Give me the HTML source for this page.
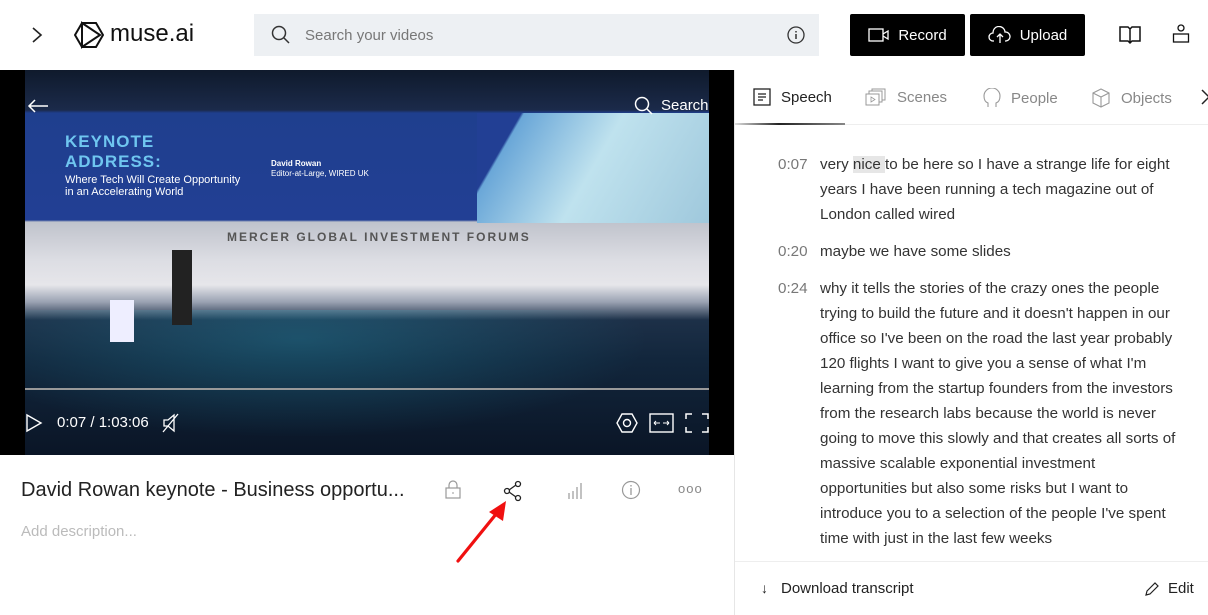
<!DOCTYPE html>
<html><head><meta charset="utf-8"><style>
*{box-sizing:border-box;margin:0;padding:0}
body{width:1208px;height:615px;overflow:hidden;background:#fff;font-family:"Liberation Sans",Arial,sans-serif;position:relative;color:#222}
.abs{position:absolute}
svg{display:block}
.btn{position:absolute;top:14px;height:42px;background:#000;color:#fff;font-size:15px;display:flex;align-items:center;justify-content:center;gap:8px;border-radius:2px}
.tab{position:absolute;top:88px;font-size:15px;color:#888;display:flex;align-items:center;gap:10px}
.row{position:absolute;left:778px;font-size:15.2px;line-height:25px;color:#333}
.row .t{position:absolute;left:0;color:#777;width:32px}
.row .x{position:absolute;left:42px;width:362px}
</style></head><body>
<!-- header -->
<svg class="abs" style="left:30px;top:26px" width="14" height="18"><path d="M3 2l8 7-8 7" fill="none" stroke="#222" stroke-width="1.6"/></svg>
<svg class="abs" style="left:74px;top:21px" width="30" height="28" viewBox="0 0 30 28"><path d="M8 2h14l7 12-7 12H8L1 14z" fill="none" stroke="#111" stroke-width="2"/><path d="M8 2l18 12L8 26z" fill="none" stroke="#111" stroke-width="2"/></svg>
<div class="abs" style="left:110px;top:20px;font-size:24px;color:#111">muse.ai</div>
<div class="abs" style="left:254px;top:14px;width:565px;height:42px;background:#edf0f3"></div>
<svg class="abs" style="left:271px;top:25px" width="20" height="20"><circle cx="8" cy="8" r="6.5" fill="none" stroke="#333" stroke-width="1.5"/><path d="M13 13l5 5" stroke="#333" stroke-width="1.5"/></svg>
<div class="abs" style="left:305px;top:27px;font-size:15px;color:#777">Search your videos</div>
<svg class="abs" style="left:787px;top:26px" width="18" height="18"><circle cx="9" cy="9" r="8" fill="none" stroke="#333" stroke-width="1.3"/><path d="M9 8v5M9 5v1.5" stroke="#333" stroke-width="1.5"/></svg>
<div class="btn" style="left:850px;width:115px"><svg width="22" height="16"><rect x="1" y="2" width="14" height="12" fill="none" stroke="#fff" stroke-width="1.3"/><path d="M15 7l5-3v8l-5-3" fill="none" stroke="#fff" stroke-width="1.3"/></svg>Record</div>
<div class="btn" style="left:970px;width:115px"><svg width="24" height="18"><path d="M6 15H5a4 4 0 0 1 0-8 6 6 0 0 1 12-1 4.5 4.5 0 0 1 1 9h-1" fill="none" stroke="#fff" stroke-width="1.3"/><path d="M12 17V8M9 11l3-3 3 3" fill="none" stroke="#fff" stroke-width="1.3"/></svg>Upload</div>
<svg class="abs" style="left:1119px;top:25px" width="22" height="20"><path d="M1 2h8l2 2 2-2h8v14h-8l-2 2-2-2H1zM11 4v13" fill="none" stroke="#111" stroke-width="1.5"/></svg>
<svg class="abs" style="left:1172px;top:24px" width="18" height="20"><circle cx="9" cy="4" r="3" fill="none" stroke="#111" stroke-width="1.3"/><rect x="1.5" y="10" width="15" height="8" fill="none" stroke="#111" stroke-width="1.3"/></svg>

<!-- video -->
<div class="abs" style="left:0;top:70px;width:735px;height:385px;background:#000;overflow:hidden">
 <div class="abs" style="left:25px;top:0;width:684px;height:385px;background:linear-gradient(#0f1a2c 0,#1b2a4a 40px,#1f3f8e 43px,#223f94 150px,#c0c3cc 152px,#dcdde3 190px,#e6e6ea 215px,#9aa2b2 232px,#1d3048 250px,#12263c 290px,#0a1526 385px)"></div>
 <div class="abs" style="left:477px;top:43px;width:232px;height:110px;background:linear-gradient(120deg,#223f94 0,#223f94 15%,#6aa7d8 16%,#bfe2ee 50%,#9fc8dc 100%)"></div>
 <div class="abs" style="left:25px;top:240px;width:684px;height:145px;background:radial-gradient(ellipse at 40% 20%,rgba(40,170,200,.3),transparent 60%)"></div>
 <div class="abs" style="left:65px;top:62px;color:#6fc6f0;font-size:17px;font-weight:bold;letter-spacing:1px;line-height:20px">KEYNOTE<br>ADDRESS:</div>
 <div class="abs" style="left:65px;top:104px;color:#fff;font-size:11px;line-height:12px">Where Tech Will Create Opportunity<br>in an Accelerating World</div>
 <div class="abs" style="left:271px;top:89px;color:#fff;font-size:8px;line-height:10px"><b>David Rowan</b><br>Editor-at-Large, WIRED UK</div>
 <div class="abs" style="left:227px;top:160px;color:#555;font-size:12px;letter-spacing:2px;font-weight:bold">MERCER GLOBAL INVESTMENT FORUMS</div>
 <div class="abs" style="left:172px;top:180px;width:20px;height:75px;background:#222"></div>
 <div class="abs" style="left:110px;top:230px;width:24px;height:42px;background:#eef"></div>
 <div class="abs" style="left:25px;top:318px;width:684px;height:2px;background:#999"></div>
 <svg class="abs" style="left:27px;top:29px" width="22" height="14"><path d="M21 7H2M8 1L2 7l6 6" fill="none" stroke="#fff" stroke-width="1.5"/></svg>
 <svg class="abs" style="left:634px;top:26px" width="20" height="20"><circle cx="8" cy="8" r="6.5" fill="none" stroke="#fff" stroke-width="1.5"/><path d="M13 13l5 5" stroke="#fff" stroke-width="1.5"/></svg>
 <div class="abs" style="left:661px;top:27px;color:#fff;font-size:15px">Search</div>
 <svg class="abs" style="left:25px;top:343px" width="18" height="20"><path d="M2 2l14 8-14 8z" fill="none" stroke="#fff" stroke-width="1.4"/></svg>
 <div class="abs" style="left:57px;top:344px;color:#fff;font-size:15px">0:07 / 1:03:06</div>
 <svg class="abs" style="left:162px;top:343px" width="18" height="20"><path d="M2 7h4l6-5v16l-6-5H2zM1 19L16 1" fill="none" stroke="#fff" stroke-width="1.3"/></svg>
 <svg class="abs" style="left:616px;top:342px" width="22" height="22"><path d="M6 2h10l5 9-5 9H6l-5-9z" fill="none" stroke="#fff" stroke-width="1.4"/><circle cx="11" cy="11" r="3.5" fill="none" stroke="#fff" stroke-width="1.4"/></svg>
 <svg class="abs" style="left:649px;top:343px" width="26" height="20"><rect x="1" y="1" width="23" height="18" fill="none" stroke="#fff" stroke-width="1.4"/><path d="M5 10h6M5 10l2-2M5 10l2 2M20 10h-6M20 10l-2-2M20 10l-2 2" stroke="#fff" stroke-width="1"/></svg>
 <svg class="abs" style="left:685px;top:343px" width="24" height="20"><path d="M1 6V1h6M17 1h6v5M23 14v5h-6M7 19H1v-5" fill="none" stroke="#fff" stroke-width="1.5"/></svg>
</div>

<!-- below video -->
<div class="abs" style="left:21px;top:479px;font-size:20px;color:#222">David Rowan keynote - Business opportu...</div>
<svg class="abs" style="left:444px;top:480px" width="18" height="20"><path d="M5 8V5a4 4 0 0 1 8 0v3" fill="none" stroke="#999" stroke-width="1.2"/><rect x="2" y="8" width="14" height="10" fill="none" stroke="#999" stroke-width="1.2"/><path d="M9 12v2" stroke="#999"/></svg>
<svg class="abs" style="left:503px;top:480px" width="20" height="22"><circle cx="15" cy="4" r="2.5" fill="none" stroke="#222" stroke-width="1.3"/><circle cx="4" cy="11" r="2.5" fill="none" stroke="#222" stroke-width="1.3"/><circle cx="15" cy="18" r="2.5" fill="none" stroke="#222" stroke-width="1.3"/><path d="M6 10l7-5M6 12l7 5" stroke="#222" stroke-width="1.3"/></svg>
<svg class="abs" style="left:567px;top:481px" width="18" height="20"><path d="M2 18v-6M6 18v-8M10 18V6M14 18V2" stroke="#999" stroke-width="1.2"/></svg>
<svg class="abs" style="left:621px;top:480px" width="20" height="20"><circle cx="10" cy="10" r="8.5" fill="none" stroke="#999" stroke-width="1.2"/><path d="M10 8v7M10 5v1.5" stroke="#999" stroke-width="1.3"/></svg>
<div class="abs" style="left:678px;top:481px;font-size:13px;color:#888;letter-spacing:1px">ooo</div>
<svg class="abs" style="left:455px;top:500px" width="55" height="64"><path d="M3 61L46 8" stroke="#f01010" stroke-width="3.2" stroke-linecap="round"/><path d="M51 1L34 12l14 9z" fill="#f01010"/></svg>
<div class="abs" style="left:21px;top:523px;font-size:15px;color:#bbb">Add description...</div>

<!-- right panel -->
<div class="abs" style="left:734px;top:70px;width:1px;height:545px;background:#e6e6e6"></div>
<div class="tab" style="left:753px;color:#222"><svg width="18" height="18"><rect x="1" y="1" width="16" height="16" fill="none" stroke="#222" stroke-width="1.3"/><path d="M5 6h8M5 9h8M5 12h5" stroke="#222" stroke-width="1.3"/></svg>Speech</div>
<div class="tab" style="left:865px"><svg width="22" height="18"><rect x="1" y="6" width="13" height="11" fill="none" stroke="#999"/><path d="M4 6V3h13v11h-3M7 3V1h13v11h-3" fill="none" stroke="#999"/><path d="M6 9l4 2.5-4 2.5z" fill="none" stroke="#999" stroke-width=".8"/></svg>Scenes</div>
<div class="tab" style="left:983px"><svg width="18" height="20"><path d="M13 19v-4c3-1 4-4 4-7a8 8 0 0 0-16 0c0 3 1 6 4 7v4" fill="none" stroke="#999" stroke-width="1.1"/></svg>People</div>
<div class="tab" style="left:1091px"><svg width="20" height="20"><path d="M10 1l8 4v10l-8 4-8-4V5zM2 5l8 4 8-4M10 9v10" fill="none" stroke="#999" stroke-width="1.1"/></svg>Objects</div>
<svg class="abs" style="left:1200px;top:88px" width="8" height="18"><path d="M2 2l7 7-7 7" fill="none" stroke="#222" stroke-width="1.5"/></svg>
<div class="abs" style="left:735px;top:124px;width:473px;height:1px;background:#eee"></div>
<div class="abs" style="left:735px;top:123px;width:110px;height:2px;background:linear-gradient(90deg,#ddd,#222 40%,#888 100%)"></div>

<div class="row" style="top:152px;height:75px"><span class="t">0:07</span><span class="x">very <span style="background:#e6e6e6">nice </span>to be here so I have a strange life for eight years I have been running a tech magazine out of London called wired</span></div>
<div class="row" style="top:239px;height:25px"><span class="t">0:20</span><span class="x">maybe we have some slides</span></div>
<div class="row" style="top:276px;height:275px"><span class="t">0:24</span><span class="x">why it tells the stories of the crazy ones the people trying to build the future and it doesn't happen in our office so I've been on the road the last year probably 120 flights I want to give you a sense of what I'm learning from the startup founders from the investors from the research labs because the world is never going to move this slowly and that creates all sorts of massive scalable exponential investment opportunities but also some risks but I want to introduce you to a selection of the people I've spent time with just in the last few weeks</span></div>

<div class="abs" style="left:735px;top:561px;width:473px;height:1px;background:#eee"></div>
<div class="abs" style="left:761px;top:580px;font-size:14px;color:#222">↓</div>
<div class="abs" style="left:781px;top:580px;font-size:15px;color:#222">Download transcript</div>
<svg class="abs" style="left:1145px;top:582px" width="14" height="14"><path d="M1 13l1-4 8-8 3 3-8 8z" fill="none" stroke="#222" stroke-width="1.2"/></svg>
<div class="abs" style="left:1168px;top:580px;font-size:15px;color:#222">Edit</div>
</body></html>
